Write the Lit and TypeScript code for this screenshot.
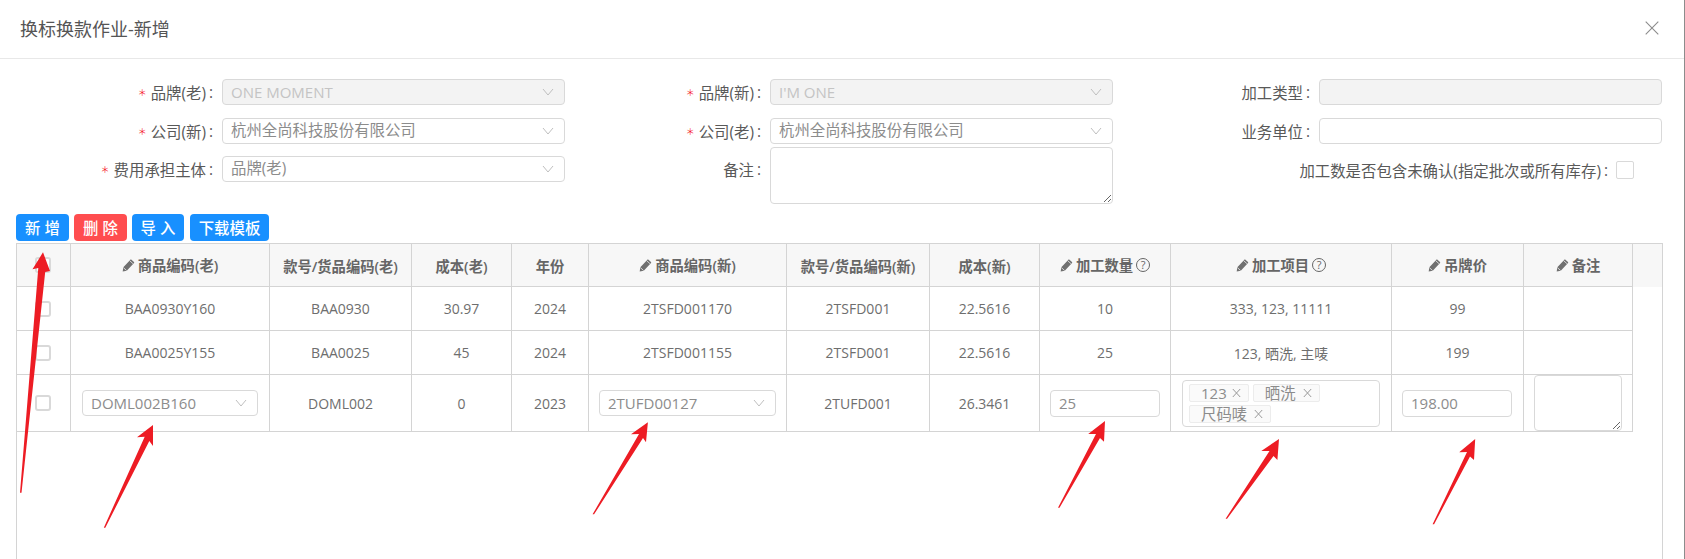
import { LitElement, html, css, svg } from "lit";
import { customElement } from "lit/decorators.js";

const chevron = html`<svg class="chev" width="12" height="8" viewBox="0 0 12 8"><path d="M1 1l5 6 5-6" fill="none" stroke="#bfbfbf" stroke-width="1"/></svg>`;
const pencil = html`<svg class="pencil" width="13" height="14" viewBox="0 0 12 13"><path d="M8.2 1.2l2.9 2.5c.3.3.3.6 0 .9L4.4 11.8 0.6 12.6l.6-3.9z" fill="#707070"/><path d="M1.3 9l2.9 2.6M7.2 2.6l2.9 2.6" stroke="#f7f7f7" stroke-width=".7" fill="none"/></svg>`;
const xIcon = html`<svg class="tagx" width="9" height="10" viewBox="0 0 9 10"><path d="M.8 1l7.4 8M8.2 1L.8 9" stroke="#999" stroke-width="1" fill="none"/></svg>`;
const req = html`<span class="req">＊</span>`;

const arrows: number[][][] = [
  [[20, 492.7], [38.3, 268], [32.5, 269.3], [43, 252.3], [50, 271], [45.2, 272]],
  [[103.8, 527.7], [144.7, 436.7], [137, 437.3], [153, 425], [153, 446], [149.3, 441]],
  [[592.6, 514.3], [639, 434], [631, 434.3], [647.9, 422.3], [646, 442.3], [643, 438]],
  [[1058, 507.7], [1096, 434], [1088.2, 434], [1105, 421], [1104, 441.7], [1100, 438]],
  [[1225.6, 518.7], [1269.5, 451], [1261.3, 451], [1279, 439], [1277.4, 460], [1273.5, 456]],
  [[1432.6, 524.3], [1467, 452], [1459.2, 452.3], [1475.2, 439], [1474, 460], [1470, 456.5]],
];

const rows = [
  ["BAA0930Y160", "BAA0930", "30.97", "2024", "2TSFD001170", "2TSFD001", "22.5616", "10", "333, 123, 11111", "99", ""],
  ["BAA0025Y155", "BAA0025", "45", "2024", "2TSFD001155", "2TSFD001", "22.5616", "25", "123, 晒洗, 主唛", "199", ""],
];
const colWidths = [54, 199, 142, 100, 77, 198, 143, 110, 131, 221, 132, 109];

@customElement("app-root")
export class AppRoot extends LitElement {
  static styles = css`
    :host {
      display: block;
      position: relative;
      width: 1685px;
      height: 559px;
      overflow: hidden;
      background: #fff;
      box-sizing: border-box;
      border-right: 1px solid #8c8c8c;
      font-family: "Open Sans", "Noto Sans CJK SC", sans-serif;
      font-size: 15px;
      color: #595959;
    }
    * { box-sizing: border-box; }
    .page { display: flex; flex-direction: column; height: 559px; }
    .head {
      height: 59px;
      flex: none;
      border-bottom: 1px solid #e8e8e8;
      display: flex;
      align-items: center;
      justify-content: space-between;
      padding: 0 25px 2px 20px;
      font-size: 18px;
      color: #555;
    }
    .close { display: block; }
    .form {
      flex: none;
      display: grid;
      grid-template-columns: 213px 9px 343px 196px 9px 343px 197px 9px 343px;
      grid-template-rows: 39px 29px 57px;
      padding-top: 20px;
      height: 145px;
    }
    .lab {
      display: flex;
      justify-content: flex-end;
      align-items: center;
      height: 27px;
      white-space: nowrap;
      font-size: 15.4px;
      color: #595959;
    }
    .lab.low { margin-top: 9px; }
    .colon { margin-left: 3px; }
    .req { color: #f5222d; font-size: 9px; margin-right: 4px; }
    .sel, .inp {
      display: flex;
      align-items: center;
      justify-content: space-between;
      height: 26px;
      padding: 0 10px 0 8px;
      border: 1px solid #d9d9d9;
      border-radius: 4px;
      background: #fff;
      color: #8c8c8c;
      white-space: nowrap;
    }
    .sel.low { margin-top: 9px; }
    .sel.off, .inp.off { background: #f3f3f3; color: #c4c4c4; }
    .cn { font-size: 15.4px; line-height: 22px; }
    .ta {
      display: block;
      width: 100%;
      height: 57px;
      border: 1px solid #d9d9d9;
      border-radius: 4px;
      background: #fff;
      margin: 0;
      font: inherit;
    }
    .check-wrap {
      grid-column: 7 / 10;
      display: flex;
      justify-content: flex-end;
      align-items: center;
      height: 18px;
      margin-top: 14px;
      padding-right: 28px;
      white-space: nowrap;
      font-size: 15.4px;
    }
    .check-wrap .colon { margin-right: 8px; }
    .box {
      display: block;
      width: 18px;
      height: 18px;
      border: 1px solid #d9d9d9;
      border-radius: 2px;
      background: #fff;
    }
    .bar { flex: none; display: flex; height: 29px; padding-left: 16px; margin-top: 10px; }
    .btn {
      display: flex;
      align-items: center;
      justify-content: center;
      height: 27px;
      border-radius: 4px;
      color: #fff;
      background: #1890ff;
      font-size: 15.4px;
      font-weight: 500;
      white-space: nowrap;
    }
    .btn.add { width: 53px; margin-right: 5px; }
    .btn.del { width: 53px; margin-right: 5px; background: #ff4d4f; }
    .btn.imp { width: 52px; margin-right: 6px; }
    .btn.tpl { width: 79px; }
    .area {
      flex: 1;
      display: flex;
      align-items: flex-start;
      width: 1647px;
      margin-left: 16px;
      border: 1px solid #d4d4d4;
      border-bottom: 0;
    }
    table { border-collapse: separate; border-spacing: 0; table-layout: fixed; width: 1616px; flex: none; }
    th, td {
      border-right: 1px solid #d4d4d4;
      border-bottom: 1px solid #d4d4d4;
      padding: 0;
      text-align: center;
      vertical-align: middle;
      font-size: 14px;
      color: #6e6e6e;
    }
    th { height: 43px; background: #f7f7f7; font-size: 14.3px; font-weight: 600; color: #666; }
    tbody tr { height: 44px; }
    tbody tr.edit { height: 57px; }
    .th-in { display: inline-flex; align-items: center; gap: 3px; white-space: nowrap; }
    .help {
      display: inline-flex;
      align-items: center;
      justify-content: center;
      width: 14px;
      height: 14px;
      border: 1px solid #666;
      border-radius: 50%;
      font-size: 11px;
      font-weight: 400;
      line-height: 1;
      color: #666;
    }
    .cb {
      display: block;
      width: 16px;
      height: 16px;
      margin: 0 0 0 18px;
      border: 2px solid #d9d9d9;
      border-radius: 3px;
      background: #fff;
    }
    .pad { padding: 0 10px; }
    .pad.wide { padding: 0 11px; }
    td .sel { height: 26px; font-size: 15px; color: #8c8c8c; padding-left: 8px; }
    td .inp { height: 27px; font-size: 15px; width: 110px; }
    .multi {
      display: flex;
      flex-wrap: wrap;
      align-content: flex-start;
      gap: 3px 4px;
      width: 198px;
      height: 47px;
      margin: 0 0 0 11px;
      padding: 3px 6px;
      border: 1px solid #d9d9d9;
      border-radius: 4px;
    }
    .tag {
      display: inline-flex;
      align-items: center;
      gap: 5px;
      height: 18px;
      padding: 0 7px 0 11px;
      border: 1px solid #ececec;
      border-radius: 2px;
      background: #fafafa;
      font-size: 15px;
      color: #8c8c8c;
      white-space: nowrap;
    }
    .tag.zh { font-size: 15.4px; gap: 7px; }
    .note { height: 56px; width: 88px; margin-left: 10px; }
    .note-cell { text-align: left; vertical-align: top; }
    .filler { flex: 1; height: 43px; background: #f7f7f7; }
    .arrows { position: absolute; left: 0; top: 0; pointer-events: none; }
  `;

  private th(label: string, edit = false, help = false) {
    return html`<th><span class="th-in">${edit ? pencil : ""}<span>${label}</span>${help ? html`<span class="help">?</span>` : ""}</span></th>`;
  }

  private lab(text: string, required = false, low = false) {
    return html`<div class="lab ${low ? "low" : ""}">${required ? req : ""}<span>${text}</span><span class="colon">:</span></div><div></div>`;
  }

  render() {
    return html`
      <div class="page">
        <div class="head">
          <span>换标换款作业-新增</span>
          <svg class="close" width="14" height="14" viewBox="0 0 14 14"><path d="M.7.7l12.6 12.6M13.3.7L.7 13.3" stroke="#8c8c8c" stroke-width="1.1" fill="none"/></svg>
        </div>
        <div class="form">
          ${this.lab("品牌(老)", true)}
          <div class="sel off"><span>ONE MOMENT</span>${chevron}</div>
          ${this.lab("品牌(新)", true)}
          <div class="sel off"><span>I'M ONE</span>${chevron}</div>
          ${this.lab("加工类型")}
          <div class="inp off"></div>

          ${this.lab("公司(新)", true)}
          <div class="sel"><span class="cn">杭州全尚科技股份有限公司</span>${chevron}</div>
          ${this.lab("公司(老)", true)}
          <div class="sel"><span class="cn">杭州全尚科技股份有限公司</span>${chevron}</div>
          ${this.lab("业务单位")}
          <div class="inp"></div>

          ${this.lab("费用承担主体", true, true)}
          <div class="sel low"><span class="cn">品牌(老)</span>${chevron}</div>
          ${this.lab("备注", false, true)}
          <textarea class="ta"></textarea>
          <div class="check-wrap"><span>加工数是否包含未确认(指定批次或所有库存)</span><span class="colon">:</span><span class="box"></span></div>
        </div>
        <div class="bar">
          <div class="btn add">新 增</div>
          <div class="btn del">删 除</div>
          <div class="btn imp">导 入</div>
          <div class="btn tpl">下载模板</div>
        </div>
        <div class="area">
          <table>
            <colgroup>${colWidths.map((w) => html`<col style="width:${w}px" />`)}</colgroup>
            <thead>
              <tr>
                <th><span class="cb"></span></th>
                ${this.th("商品编码(老)", true)}
                ${this.th("款号/货品编码(老)")}
                ${this.th("成本(老)")}
                ${this.th("年份")}
                ${this.th("商品编码(新)", true)}
                ${this.th("款号/货品编码(新)")}
                ${this.th("成本(新)")}
                ${this.th("加工数量", true, true)}
                ${this.th("加工项目", true, true)}
                ${this.th("吊牌价", true)}
                ${this.th("备注", true)}
              </tr>
            </thead>
            <tbody>
              ${rows.map(
                (r) => html`<tr>
                  <td><span class="cb"></span></td>
                  ${r.map((c) => html`<td>${c}</td>`)}
                </tr>`
              )}
              <tr class="edit">
                <td><span class="cb"></span></td>
                <td class="pad wide"><div class="sel"><span>DOML002B160</span>${chevron}</div></td>
                <td>DOML002</td>
                <td>0</td>
                <td>2023</td>
                <td class="pad"><div class="sel"><span>2TUFD00127</span>${chevron}</div></td>
                <td>2TUFD001</td>
                <td>26.3461</td>
                <td class="pad"><div class="inp">25</div></td>
                <td>
                  <div class="multi">
                    <span class="tag">123${xIcon}</span>
                    <span class="tag zh">晒洗${xIcon}</span>
                    <span class="tag zh">尺码唛${xIcon}</span>
                  </div>
                </td>
                <td class="pad"><div class="inp">198.00</div></td>
                <td class="note-cell"><textarea class="ta note"></textarea></td>
              </tr>
            </tbody>
          </table>
          <div class="filler"></div>
        </div>
      </div>
      <svg class="arrows" width="1685" height="559" viewBox="0 0 1685 559">
        ${arrows.map((a) => svg`<polygon points=${[...a, [a[0][0] + 1.5, a[0][1]]].map((p) => p.join(",")).join(" ")} fill="#ed1c24" />`)}
      </svg>
    `;
  }
}
